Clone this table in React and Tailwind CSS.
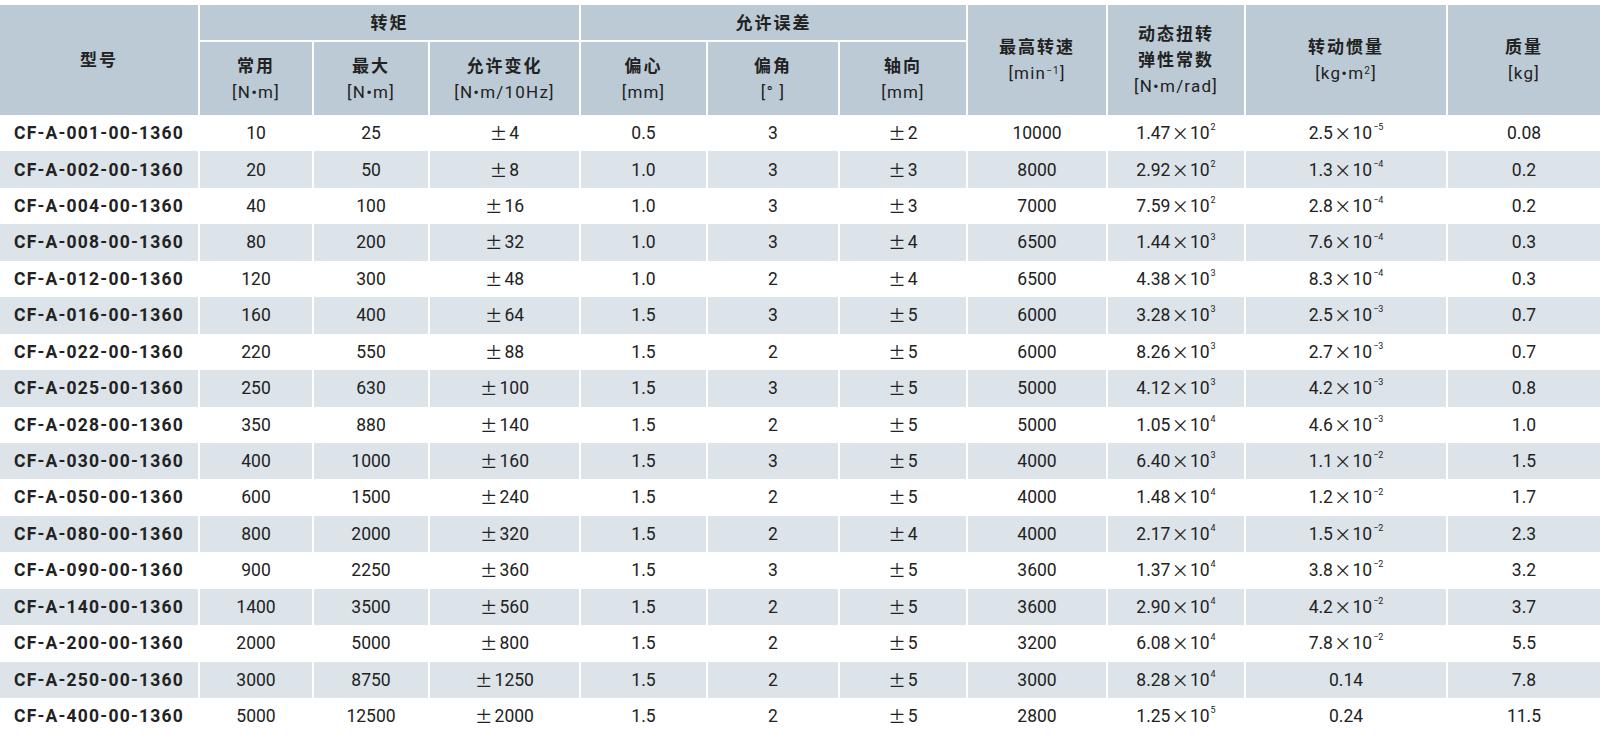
import React from "react";

// 列宽：每列之间留 2px 白色缝隙
const COLS = "grid-cols-[198px_112px_114px_149px_125px_130px_126px_138px_136px_200px_152px]";
const CJK = { fontFamily: '"Noto Sans CJK SC", sans-serif' };

const rows = [
  ["CF-A-001-00-1360", "10", "25", "4", "0.5", "3", "2", "10000", ["1.47", "2"], ["2.5", "−5"], "0.08"],
  ["CF-A-002-00-1360", "20", "50", "8", "1.0", "3", "3", "8000", ["2.92", "2"], ["1.3", "−4"], "0.2"],
  ["CF-A-004-00-1360", "40", "100", "16", "1.0", "3", "3", "7000", ["7.59", "2"], ["2.8", "−4"], "0.2"],
  ["CF-A-008-00-1360", "80", "200", "32", "1.0", "3", "4", "6500", ["1.44", "3"], ["7.6", "−4"], "0.3"],
  ["CF-A-012-00-1360", "120", "300", "48", "1.0", "2", "4", "6500", ["4.38", "3"], ["8.3", "−4"], "0.3"],
  ["CF-A-016-00-1360", "160", "400", "64", "1.5", "3", "5", "6000", ["3.28", "3"], ["2.5", "−3"], "0.7"],
  ["CF-A-022-00-1360", "220", "550", "88", "1.5", "2", "5", "6000", ["8.26", "3"], ["2.7", "−3"], "0.7"],
  ["CF-A-025-00-1360", "250", "630", "100", "1.5", "3", "5", "5000", ["4.12", "3"], ["4.2", "−3"], "0.8"],
  ["CF-A-028-00-1360", "350", "880", "140", "1.5", "2", "5", "5000", ["1.05", "4"], ["4.6", "−3"], "1.0"],
  ["CF-A-030-00-1360", "400", "1000", "160", "1.5", "3", "5", "4000", ["6.40", "3"], ["1.1", "−2"], "1.5"],
  ["CF-A-050-00-1360", "600", "1500", "240", "1.5", "2", "5", "4000", ["1.48", "4"], ["1.2", "−2"], "1.7"],
  ["CF-A-080-00-1360", "800", "2000", "320", "1.5", "2", "4", "4000", ["2.17", "4"], ["1.5", "−2"], "2.3"],
  ["CF-A-090-00-1360", "900", "2250", "360", "1.5", "3", "5", "3600", ["1.37", "4"], ["3.8", "−2"], "3.2"],
  ["CF-A-140-00-1360", "1400", "3500", "560", "1.5", "2", "5", "3600", ["2.90", "4"], ["4.2", "−2"], "3.7"],
  ["CF-A-200-00-1360", "2000", "5000", "800", "1.5", "2", "5", "3200", ["6.08", "4"], ["7.8", "−2"], "5.5"],
  ["CF-A-250-00-1360", "3000", "8750", "1250", "1.5", "2", "5", "3000", ["8.28", "4"], "0.14", "7.8"],
  ["CF-A-400-00-1360", "5000", "12500", "2000", "1.5", "2", "5", "2800", ["1.25", "5"], "0.24", "11.5"],
];

const Sci = ({ v }) => {
  if (!Array.isArray(v)) return <>{v}</>;
  return (
    <>
      {v[0]}
      <span className="mx-[1px]" style={CJK}>×</span>10
      <sup className="text-[9px] ml-[1px] -top-[6px]">{v[1]}</sup>
    </>
  );
};

const Pm = ({ v }) => (
  <>
    <span className="mr-[2px]" style={CJK}>±</span>
    {v}
  </>
);

const H = ({ cn, unit, className = "" }) => (
  <div className={`bg-[#bccad5] flex flex-col items-center justify-center text-center leading-[26px] ${className}`}>
    {cn.map((t) => (
      <span key={t} className="font-bold tracking-[2px]">{t}</span>
    ))}
    {unit && <span className="tracking-[1.2px]">{unit}</span>}
  </div>
);

export default function App() {
  return (
    <div
      className="w-[1600px] h-[742px] bg-white text-[17px] text-[#222] overflow-hidden"
      style={{ fontFamily: 'Roboto, "Noto Sans CJK SC", sans-serif' }}
    >
      {/* 表头 */}
      <div className={`grid ${COLS} grid-rows-[35px_73px] gap-[2px] mt-[5px]`}>
        <H cn={["型号"]} className="row-span-2" />
        <H cn={["转矩"]} className="col-span-3" />
        <H cn={["允许误差"]} className="col-span-3" />
        <H cn={["最高转速"]} unit={<>[min<sup className="text-[10px]">−1</sup>]</>} className="row-span-2" />
        <H cn={["动态扭转", "弹性常数"]} unit="[N•m/rad]" className="row-span-2 leading-[24px]" />
        <H cn={["转动惯量"]} unit={<>[kg•m<sup className="text-[10px]">2</sup>]</>} className="row-span-2" />
        <H cn={["质量"]} unit="[kg]" className="row-span-2" />
        <H cn={["常用"]} unit="[N•m]" />
        <H cn={["最大"]} unit="[N•m]" />
        <H cn={["允许变化"]} unit="[N•m/10Hz]" />
        <H cn={["偏心"]} unit="[mm]" />
        <H cn={["偏角"]} unit="[° ]" />
        <H cn={["轴向"]} unit="[mm]" />
      </div>

      {/* 数据 */}
      {rows.map((r, i) => {
        const bg = i % 2 === 1 ? "bg-[#dce3e9]" : "bg-white";
        const cells = [
          <span className="font-bold text-[17.5px] tracking-[1.2px]">{r[0]}</span>,
          r[1],
          r[2],
          <Pm v={r[3]} />,
          r[4],
          r[5],
          <Pm v={r[6]} />,
          r[7],
          <Sci v={r[8]} />,
          <Sci v={r[9]} />,
          r[10],
        ];
        return (
          <div key={r[0]} className={`grid ${COLS} gap-x-[2px] h-[36.45px] text-[17.5px]`}>
            {cells.map((c, j) => (
              <div key={j} className={`${bg} flex items-center justify-center whitespace-nowrap`}>
                {c}
              </div>
            ))}
          </div>
        );
      })}
    </div>
  );
}
